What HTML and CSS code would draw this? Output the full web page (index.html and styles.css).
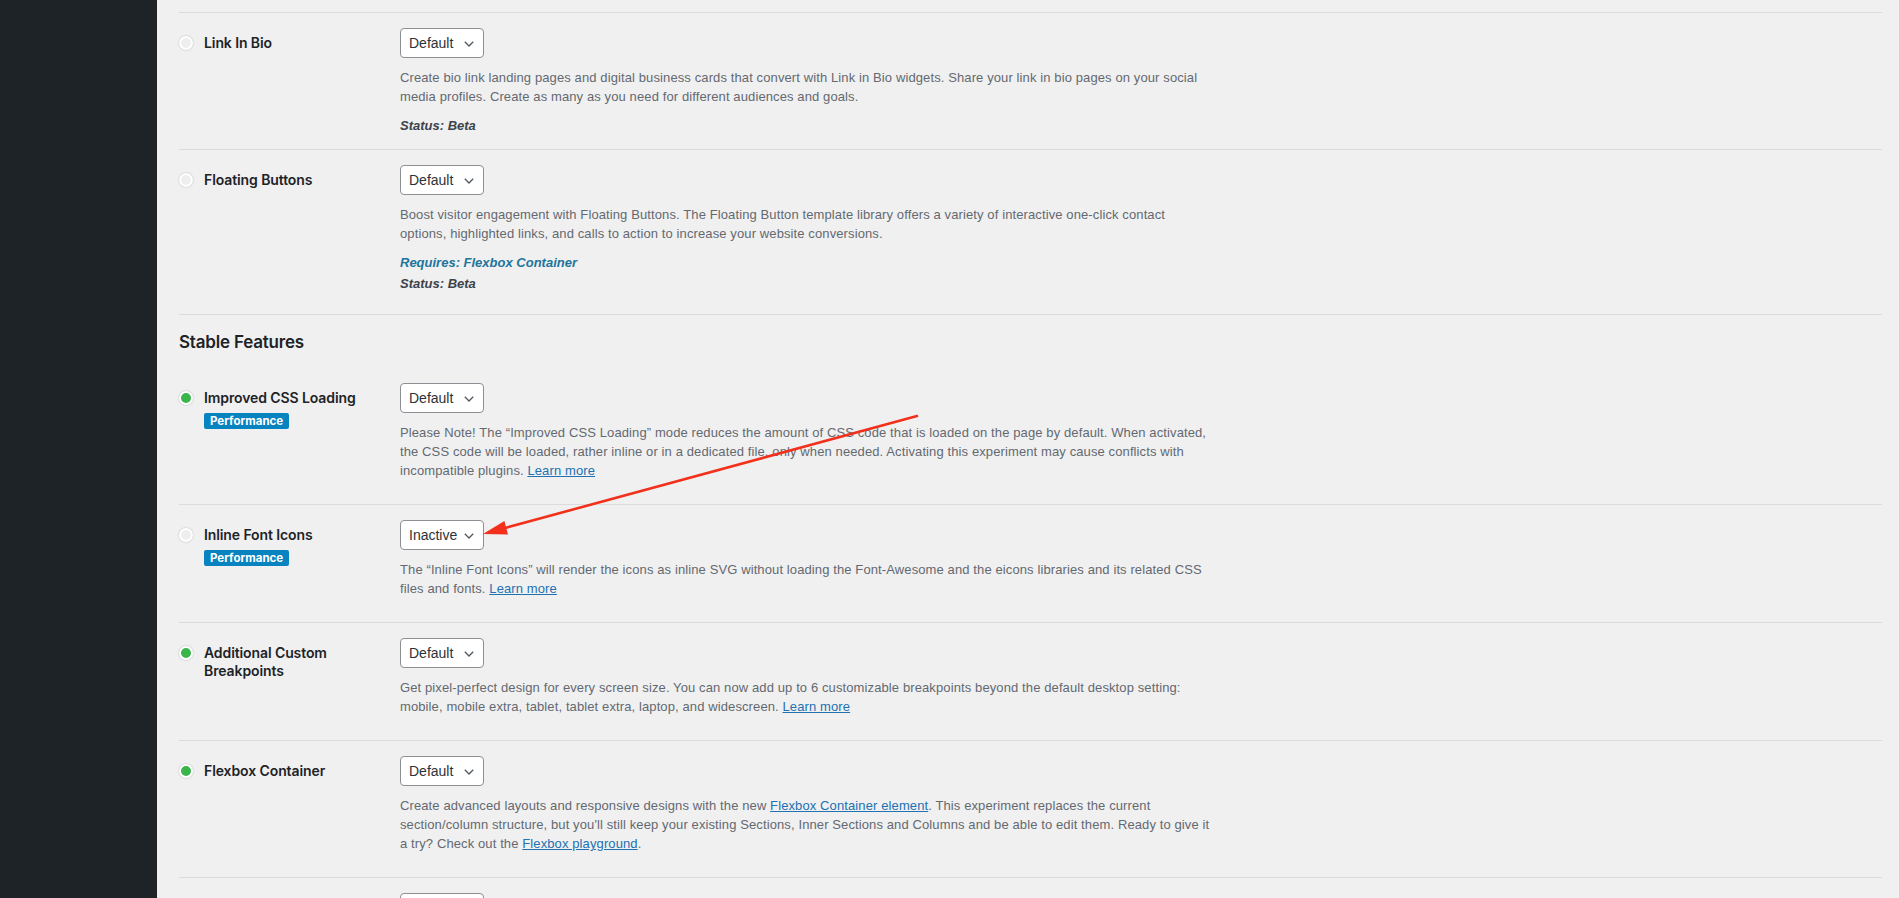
FILE: index.html
```html
<!DOCTYPE html>
<html lang="en">
<head>
<meta charset="utf-8">
<title>Experiments</title>
<link rel="stylesheet" href="styles.css">
</head>
<body>
<div class="layout">
  <aside class="sidebar"></aside>
  <main class="main">
    <div class="prev-row"></div>

    <div class="experiment">
      <div class="exp-label">
        <span class="dot"></span>
        <div class="exp-title"><span class="title-text">Link In Bio</span></div>
      </div>
      <div class="exp-content">
        <div class="select"><span>Default</span><svg class="chev" width="10" height="6" viewBox="0 0 10 6"><path d="M0.8 0.8 L5 5 L9.2 0.8" fill="none" stroke="#50575e" stroke-width="1.3"/></svg></div>
        <p class="description">Create bio link landing pages and digital business cards that convert with Link in Bio widgets. Share your link in bio pages on your social<br>media profiles. Create as many as you need for different audiences and goals.</p>
        <div class="status">Status: Beta</div>
      </div>
    </div>

    <div class="experiment">
      <div class="exp-label">
        <span class="dot"></span>
        <div class="exp-title"><span class="title-text">Floating Buttons</span></div>
      </div>
      <div class="exp-content">
        <div class="select"><span>Default</span><svg class="chev" width="10" height="6" viewBox="0 0 10 6"><path d="M0.8 0.8 L5 5 L9.2 0.8" fill="none" stroke="#50575e" stroke-width="1.3"/></svg></div>
        <p class="description">Boost visitor engagement with Floating Buttons. The Floating Button template library offers a variety of interactive one-click contact<br>options, highlighted links, and calls to action to increase your website conversions.</p>
        <div class="requires">Requires: Flexbox Container</div>
        <div class="status status-spaced">Status: Beta</div>
      </div>
    </div>

    <h2 class="section-title">Stable Features</h2>

    <div class="experiment">
      <div class="exp-label">
        <span class="dot dot-active"></span>
        <div class="exp-title"><span class="title-text">Improved CSS Loading</span><span class="tag">Performance</span></div>
      </div>
      <div class="exp-content">
        <div class="select"><span>Default</span><svg class="chev" width="10" height="6" viewBox="0 0 10 6"><path d="M0.8 0.8 L5 5 L9.2 0.8" fill="none" stroke="#50575e" stroke-width="1.3"/></svg></div>
        <p class="description">Please Note! The “Improved CSS Loading” mode reduces the amount of CSS code that is loaded on the page by default. When activated,<br>the CSS code will be loaded, rather inline or in a dedicated file, only when needed. Activating this experiment may cause conflicts with<br>incompatible plugins. <a href="#">Learn more</a></p>
      </div>
    </div>

    <div class="experiment">
      <div class="exp-label">
        <span class="dot"></span>
        <div class="exp-title"><span class="title-text">Inline Font Icons</span><span class="tag">Performance</span></div>
      </div>
      <div class="exp-content">
        <div class="select"><span>Inactive</span><svg class="chev" width="10" height="6" viewBox="0 0 10 6"><path d="M0.8 0.8 L5 5 L9.2 0.8" fill="none" stroke="#50575e" stroke-width="1.3"/></svg></div>
        <p class="description">The “Inline Font Icons” will render the icons as inline SVG without loading the Font-Awesome and the eicons libraries and its related CSS<br>files and fonts. <a href="#">Learn more</a></p>
      </div>
    </div>

    <div class="experiment">
      <div class="exp-label">
        <span class="dot dot-active"></span>
        <div class="exp-title"><span class="title-text">Additional Custom Breakpoints</span></div>
      </div>
      <div class="exp-content">
        <div class="select"><span>Default</span><svg class="chev" width="10" height="6" viewBox="0 0 10 6"><path d="M0.8 0.8 L5 5 L9.2 0.8" fill="none" stroke="#50575e" stroke-width="1.3"/></svg></div>
        <p class="description">Get pixel-perfect design for every screen size. You can now add up to 6 customizable breakpoints beyond the default desktop setting:<br>mobile, mobile extra, tablet, tablet extra, laptop, and widescreen. <a href="#">Learn more</a></p>
      </div>
    </div>

    <div class="experiment">
      <div class="exp-label">
        <span class="dot dot-active"></span>
        <div class="exp-title"><span class="title-text">Flexbox Container</span></div>
      </div>
      <div class="exp-content">
        <div class="select"><span>Default</span><svg class="chev" width="10" height="6" viewBox="0 0 10 6"><path d="M0.8 0.8 L5 5 L9.2 0.8" fill="none" stroke="#50575e" stroke-width="1.3"/></svg></div>
        <p class="description">Create advanced layouts and responsive designs with the new <a href="#">Flexbox Container element</a>. This experiment replaces the current<br>section/column structure, but you'll still keep your existing Sections, Inner Sections and Columns and be able to edit them. Ready to give it<br>a try? Check out the <a href="#">Flexbox playground</a>.</p>
      </div>
    </div>

    <div class="experiment">
      <div class="exp-label">
        <span class="dot dot-active"></span>
        <div class="exp-title"><span class="title-text">Nested Elements</span></div>
      </div>
      <div class="exp-content">
        <div class="select"><span>Default</span><svg class="chev" width="10" height="6" viewBox="0 0 10 6"><path d="M0.8 0.8 L5 5 L9.2 0.8" fill="none" stroke="#50575e" stroke-width="1.3"/></svg></div>
        <p class="description">Create a rich user experience by layering widgets together inside "Nested" Tabs, etc.</p>
      </div>
    </div>
  </main>
</div>

<svg class="annotation" width="1899" height="898" viewBox="0 0 1899 898">
  <line x1="917" y1="416" x2="506" y2="527.7" stroke="#f2301b" stroke-width="2.6" stroke-linecap="round"/>
  <polygon points="483,534 508,534.5 504.4,520.9" fill="#f2301b"/>
</svg>
</body>
</html>
```
FILE: styles.css
```css
html, body {
  margin: 0;
  padding: 0;
  height: 100%;
  overflow: hidden;
}

body {
  background: #f0f0f1;
  font-family: "Liberation Sans", Arial, sans-serif;
  color: #1d2327;
  position: relative;
}

.layout {
  display: flex;
  min-height: 100vh;
}

.sidebar {
  width: 157px;
  flex: 0 0 157px;
  background: #1d2327;
}

.main {
  flex: 1;
  padding: 0 17px 0 22px;
}

.prev-row {
  height: 12px;
  border-bottom: 1px solid #dcdcde;
}

.experiment {
  display: grid;
  grid-template-columns: 221px 1fr;
  padding: 15px 0 14px;
  border-bottom: 1px solid #dcdcde;
}

.exp-label {
  display: flex;
  align-items: flex-start;
  gap: 11px;
}

.dot {
  flex: 0 0 auto;
  box-sizing: border-box;
  width: 14px;
  height: 14px;
  margin-top: 8px;
  border-radius: 50%;
  border: 2.5px solid #ffffff;
  background: #eeeeef;
  box-shadow: 0 0 2px rgba(0, 0, 0, 0.25);
}

.dot-active {
  background: #39b54a;
}

.exp-title {
  display: flex;
  flex-direction: column;
  align-items: flex-start;
  width: 170px;
  padding-top: 6px;
}

.title-text {
  font-family: Inter, "Liberation Sans", Arial, sans-serif;
  font-size: 14px;
  line-height: 18px;
  font-weight: 600;
  letter-spacing: -0.1px;
  color: #1d2327;
}

.tag {
  margin-top: 6px;
  height: 16px;
  line-height: 16px;
  padding: 0 6px;
  border-radius: 2px;
  background: #0783c0;
  color: #ffffff;
  font-family: Inter, "Liberation Sans", Arial, sans-serif;
  font-size: 11.5px;
  font-weight: 700;
}

.exp-content {
  display: flex;
  flex-direction: column;
  align-items: flex-start;
}

.select {
  box-sizing: border-box;
  width: 84px;
  height: 30px;
  display: flex;
  align-items: center;
  justify-content: space-between;
  padding: 0 9px 0 8px;
  background: #ffffff;
  border: 1px solid #8c8f94;
  border-radius: 4px;
  font-size: 14px;
  color: #2c3338;
}

.chev {
  display: block;
  margin-top: 1px;
}

.description {
  margin: 10px 0 10px;
  max-width: 860px;
  font-size: 13px;
  line-height: 19px;
  letter-spacing: 0.11px;
  color: #646970;
}

.description a {
  color: #2271b1;
  text-decoration: underline;
}

.requires {
  margin-bottom: 2px;
  font-size: 13px;
  line-height: 19px;
  font-weight: 700;
  font-style: italic;
  color: #21759b;
}

.status {
  font-size: 13px;
  line-height: 19px;
  font-weight: 700;
  font-style: italic;
  color: #3c434a;
}

.status-spaced {
  margin-bottom: 7px;
}

.section-title {
  margin: 16px 0 14px;
  font-family: Inter, "Liberation Sans", Arial, sans-serif;
  font-size: 17px;
  line-height: 23px;
  font-weight: 600;
  letter-spacing: -0.2px;
  color: #1d2327;
}

.annotation {
  position: absolute;
  left: 0;
  top: 0;
  pointer-events: none;
}
```
